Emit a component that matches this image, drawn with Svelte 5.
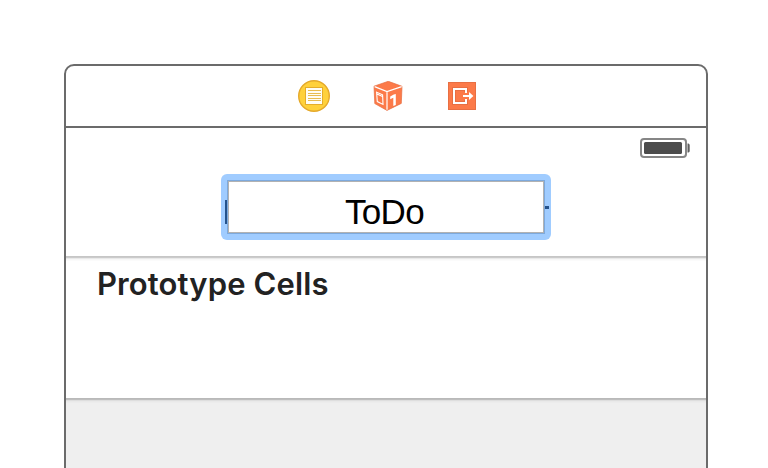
<script>
  const lines = [90.5, 93.5, 95.5, 98.5, 100.5];
</script>

<main>
  <section class="scene">
    <header class="dock">
      <svg width="32" height="32" viewBox="298 80 32 32" aria-label="View controller">
        <circle cx="314" cy="96" r="15.3" fill="#ffd13b" stroke="#e5a92b" stroke-width="1.4" />
        <rect x="305.5" y="87.5" width="17" height="17" fill="#fffdf5" stroke="#e5ad2b" />
        {#each lines as y}
          <path d="M308 {y}h13" stroke="#e8bd52" />
        {/each}
      </svg>
      <svg width="30" height="30" viewBox="373 81 30 30" aria-label="First responder">
        <path d="M388.3 81.3 402 86.3 401.3 103.4 387 110.4 374.8 103.6 374 86.2Z" fill="#fc7a49" stroke="#e56d41" stroke-width=".7" />
        <path d="M374.6 86.6 387 91.6 401.7 86.6M387 91.6V109.8" fill="none" stroke="#fff" stroke-width="1.2" />
        <path d="M376.6 92.2 382.6 94.8 383 104.4 377.3 101.6ZM377 94.1 382.5 96.6" fill="none" stroke="#fff" stroke-width="1.1" />
        <path d="M390.2 96.6 393.8 94.4 395.8 93.9V105L393.3 106V97.8L390.2 99.3Z" fill="#fff" />
      </svg>
      <svg width="28" height="28" viewBox="448 82 28 28" aria-label="Exit">
        <rect x="448.5" y="82.5" width="27" height="27" fill="#fc7a49" stroke="#e86f43" />
        <path d="M466 92V89H454V103H466V100" fill="none" stroke="#e86f43" stroke-width="4" />
        <path d="M466 93V89H454V103H466V99" fill="none" stroke="#fff" stroke-width="2" />
        <path d="M463 96H471" stroke="#fff" stroke-width="2" />
        <path d="M469 92 473.4 96 469 100Z" fill="#fff" />
      </svg>
    </header>
    <div class="navigation">
      <div class="status">
        <svg width="50" height="20" viewBox="640 138 50 20" aria-label="Battery">
          <rect x="641" y="139" width="45" height="18" rx="3" fill="#fff" stroke="#868686" stroke-width="2" />
          <rect x="644" y="142" width="38" height="12" rx="1.5" fill="#4c4c4c" />
          <path d="M687.5 143.5h1q1.2 .5 1.2 1.5v6q0 1-1.2 1.5h-1z" fill="#606060" />
        </svg>
      </div>
      <div class="focus">
        <span class="mark left"></span>
        <div class="field"><span>ToDo</span></div>
        <span class="mark right"></span>
      </div>
    </div>
    <div class="cell"><h2>Prototype Cells</h2></div>
    <div class="table"></div>
  </section>
</main>

<style>
  :global(body) { margin: 0; background: #fff; overflow: hidden; }
  main { box-sizing: border-box; width: 768px; height: 468px; padding: 64px 60px 0 64px; overflow: hidden; }
  .scene { box-sizing: border-box; width: 644px; height: 420px; border: 2px solid #6b6b6b; border-radius: 10px 10px 0 0; overflow: hidden; display: flex; flex-direction: column; }
  svg { display: block; }
  .dock { box-sizing: border-box; height: 62px; flex: none; border-bottom: 2px solid #6b6b6b; display: flex; align-items: center; gap: 43px; padding-left: 232px; }
  .dock svg:last-child { margin-left: 2px; }
  .navigation { height: 128px; flex: none; display: flex; flex-direction: column; align-items: center; }
  .status { box-sizing: border-box; width: 100%; height: 46px; padding: 10px 16px 0 0; display: flex; justify-content: flex-end; }
  .focus { position: relative; box-sizing: border-box; width: 330px; height: 66px; padding: 6px; border-radius: 6px; background: #a0ccff; }
  .field { box-sizing: border-box; height: 54px; border: 1px solid #7da9dc; box-shadow: inset 0 0 0 1px #b2b2b2; background: #fff; display: flex; justify-content: center; }
  .field span { font: 35px/40px "Liberation Sans", Arial, sans-serif; letter-spacing: -.7px; color: #000; padding-top: 11px; margin-right: 3px; }
  .mark { position: absolute; background: #24528b; }
  .left { left: 4px; top: 26px; width: 2px; height: 24px; }
  .right { left: 324px; top: 32px; width: 4px; height: 3px; }
  .cell { box-sizing: border-box; height: 142px; flex: none; padding: 7px 0 0 31px; border-top: 1px solid #c6c6c6; background: linear-gradient(#cbcbcb 0 1px, #e9e9e9 1px 2px, #f7f7f7 2px 3px, #fff 4px); }
  h2 { margin: 0; font: 600 31px/40px Inter, sans-serif; letter-spacing: .12px; color: #222; white-space: nowrap; }
  .table { flex: 1; border-top: 1px solid #b9b9b9; background: linear-gradient(#bebebe 0 1px, #dedede 1px 2px, #e9e9e9 2px 3px, #efefef 4px); }
</style>
